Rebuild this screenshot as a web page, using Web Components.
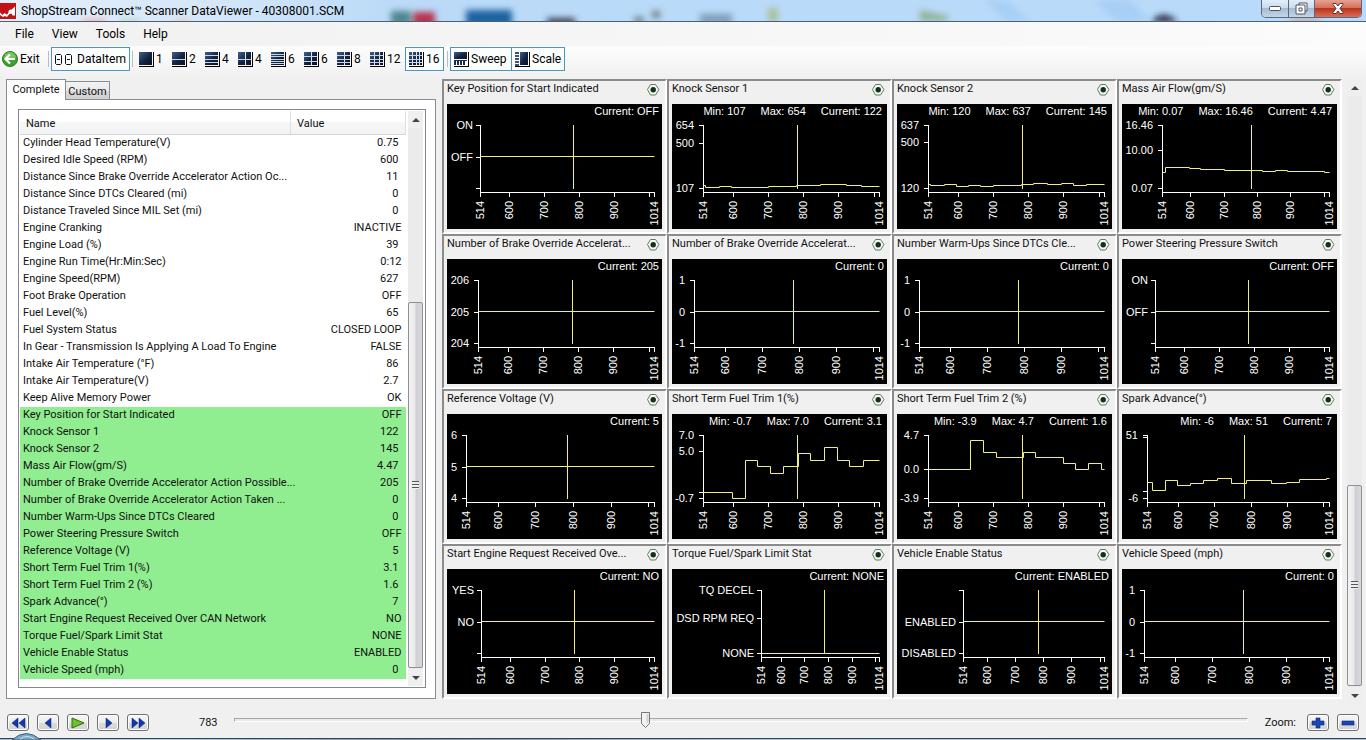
<!DOCTYPE html>
<html lang="en">
<head>
<meta charset="utf-8">
<title>ShopStream Connect Scanner DataViewer</title>
<style>
  html, body { margin: 0; height: 100%; }
  body { background: #f0f0f0; color: #111; font: 11px/17px Roboto, "Liberation Sans", sans-serif; }
</style>
</head>
<body>
<viewer-window></viewer-window>

<script>
const UI_FONT = '12px/16px Roboto, "Noto Sans", sans-serif';

/* Registers an element whose shadow root is filled from css + html. */
function element(name, css, html, setup) {
  customElements.define(name, class extends HTMLElement {
    connectedCallback() {
      if (this.shadowRoot) return;
      const root = this.attachShadow({ mode: 'open' });
      root.innerHTML = '<style>' + css + '</style>' + (typeof html === 'function' ? html(this) : html);
      if (setup) setup(this, root);
    }
  });
}

/* ---------- title bar ---------- */
element('title-bar', `
  :host { display: flex; position: relative; height: 21px; border-bottom: 1px solid #4c5f78; overflow: hidden;
    background: linear-gradient(90deg, #e4effa 0, #d4e6f8 220px, #badaf8 400px, #b9dafa 100%); color: #000; font: ${UI_FONT}; }
  .haze { position: absolute; inset: 0; width: 100%; height: 100%; }
  .logo { position: relative; flex: none; width: 16px; height: 16px; margin-top: 3px; }
  h1 { position: relative; flex: 1; margin: 3px 0 0 5px; font: inherit; white-space: nowrap; }
  .controls { position: relative; display: flex; margin-right: 4px; height: 17px; border: 1px solid #56697f; border-top: 0;
    border-radius: 0 0 5px 5px; overflow: hidden; }
  button { padding: 0; border: 0; height: 17px; width: 27px; display: grid; place-items: center;
    background: linear-gradient(#e3eefa 0, #ccdcec 45%, #a9bccf 50%, #c3d7ea 100%); border-right: 1px solid #56697f; }
  button:nth-child(2) { width: 26px; }
  button.close { width: 46px; border-right: 0; background: linear-gradient(#e6a193 0, #d5705c 45%, #bd3218 50%, #d8705a 100%); }
  svg { display: block; }`, `
  <svg class="haze" viewBox="0 0 1366 21" preserveAspectRatio="none" aria-hidden="true">
    <defs><filter id="b" x="-30%" y="-50%" width="160%" height="200%"><feGaussianBlur stdDeviation="3"/></filter></defs>
    <g filter="url(#b)">
      <path d="M82 20h24v4H82z" fill="#f09a9a"/><path d="M120 20h20v4h-20z" fill="#a5d9ae"/><path d="M175 20h14v4h-14z" fill="#d8c9a0"/>
      <path d="M391 11h20v14h-20z" fill="#4d8690"/><path d="M413 12h22v14h-22z" fill="#b8304c"/>
      <path d="M466 10h46v16h-46z" fill="#1b62a0"/><path d="M547 18h28v8h-28z" fill="#3f4550"/>
      <path d="M652 11h8v7h-8zM634 17h10v6h-10z" fill="#6f7b78"/><path d="M700 14h32v10h-32z" fill="#7f9db8"/>
      <path d="M768 8h10v14h-10z" fill="#a9c19a"/><path d="M920 10l28 6v5h-28z" fill="#8fb394"/>
      <path d="M1150 22q14-14 28 0z" fill="#1c1a30"/><path d="M1290 18h30v5h-30z" fill="#c8a890"/>
      <path d="M985 0l20 21h25L1005 0zM1130 0l20 21h-35L1095 0z" fill="#a8cff5"/>
    </g>
  </svg>
  <svg class="logo" viewBox="0 0 16 16" aria-hidden="true"><path d="M0 0h16v16H0z" fill="#c31118"/><path d="M0 9.500l2.500 2.500 2-2 2 1.500 1.500-1 1-3.500 2.500-.5L15 3.500v9h-2.500l-1-2-2 .5-2.500 3-2-1-2 1-3-2z" fill="#fff"/></svg>
  <h1>ShopStream Connect™ Scanner DataViewer - 40308001.SCM</h1>
  <div class="controls">
    <button aria-label="Minimize"><svg width="12" height="5"><rect x=".5" y=".5" width="11" height="4" rx="1" fill="#fff" stroke="#4a5568"/></svg></button>
    <button aria-label="Restore"><svg width="13" height="13"><path d="M4 1h8v8h-2v3H1V3h3z" fill="#fff" stroke="#4a5568"/><path d="M4 3h6v6M4 6h3v3H4z" fill="none" stroke="#4a5568"/></svg></button>
    <button class="close" aria-label="Close"><svg width="12" height="11"><path d="M1 .5h3L6 3 8 .5h3v1L8 5.500l3 4v1H8L6 8l-2 2.500H1v-1l3-4-3-4z" fill="#fff" stroke="#5f3434"/></svg></button>
  </div>`);

/* ---------- menu ---------- */
element('menu-bar', `
  :host { display: block; background: linear-gradient(90deg, #f1f1f1, #fafafa 90%, #fcfcfc); color: #000; font: ${UI_FONT}; }
  nav { display: flex; height: 24px; align-items: center; padding-left: 15px; gap: 18px; }
  a { color: inherit; text-decoration: none; }`,
  '<nav><a href="#file">File</a><a href="#view">View</a><a href="#tools">Tools</a><a href="#help">Help</a></nav>');

/* ---------- tool bar ---------- */
const frame = '<path d="M14 0h1v15H0v-1h14z" fill="#000"/>';
const navy = '<defs><linearGradient id="n" x1="0" y1="0" x2="1" y2="1"><stop offset="0" stop-color="#40618f"/><stop offset=".55" stop-color="#132340"/><stop offset="1" stop-color="#0b1220"/></linearGradient></defs>';
function gridIcon(cols, rows) {
  let cells = '';
  const xs = [...Array(cols + 1)].map((_, i) => Math.round(i * 13 / cols));
  const ys = [...Array(rows + 1)].map((_, i) => Math.round(i * 13 / rows));
  for (let c = 1; c < cols; c++) cells += `<path d="M${xs[c]} 0h1v13h-1z" fill="#dfe7f0"/>`;
  for (let r = 1; r < rows; r++) cells += `<path d="M0 ${ys[r]}h13v1H0z" fill="#c9d4e2"/>`;
  return `<svg width="15" height="15" aria-hidden="true">${navy}<path d="M0 0h13v13H0z" fill="url(#n)"/>${cells}${frame}</svg>`;
}
const icons = {
  exit: `<svg width="16" height="16" aria-hidden="true"><circle cx="8" cy="8" r="7.500" fill="#3fa22e" stroke="#2d7a22"/><path d="M2 7a6 6 0 0 1 12 0q-6 3-12 0z" fill="#8fd46f" opacity=".7"/><path d="M8 3.500L3.500 8 8 12.500M4 8h9" fill="none" stroke="#fff" stroke-width="2.200"/></svg>`,
  items: `<svg width="17" height="11" aria-hidden="true"><path d="M1.500.5h4l1 1v8l-1 1h-4l-1-1v-8zM11.500.5h4l1 1v8l-1 1h-4l-1-1v-8zM2 5.500h3M12 5.500h3" fill="none" stroke="#111"/></svg>`,
  sweep: `<svg width="15" height="15" aria-hidden="true">${navy}<path d="M0 0h13v7H0z" fill="url(#n)"/><path d="M0 8.500h13" stroke="#1c2c48"/><path d="M1 9v4M4 9v4M7 9v4M10 9v4" stroke="#1c2c48" stroke-width="2"/>${frame}</svg>`,
  scale: `<svg width="15" height="15" aria-hidden="true">${navy}<path d="M5 0h8v13H5z" fill="url(#n)"/><path d="M0 1h4M0 4h4M0 7h4M0 10h4M0 13h4" stroke="#3b5478" stroke-width="2"/>${frame}</svg>`
};
element('tool-button', `
  :host { display: block; color: #000; font: ${UI_FONT}; }
  button { display: flex; align-items: center; gap: 2px; box-sizing: border-box; height: 24px; width: var(--w, auto); padding: 0 0 0 3px;
    border: 1px solid transparent; background: none; color: inherit; font: inherit; white-space: nowrap; }
  :host([gap]) button { gap: 5px; }
  :host([pressed]) button { border-color: #4d94bf; background: #fbfdfe; }
  svg { flex: none; display: block; }`,
  el => {
    const k = el.getAttribute('icon');
    const art = icons[k] || gridIcon(...k.split('x').map(Number));
    return `<button aria-pressed="${el.hasAttribute('pressed')}">${art}<span><slot></slot></span></button>`;
  });
element('tool-bar', `
  :host { display: flex; height: 26px; padding: 1px 0 6px; background: linear-gradient(#fdfdfd, #f0f0f0); }
  i { width: 1px; height: 16px; margin: 4px 2px 0 3px; background: #bdbdbd; }
  i.tight { margin: 4px 2px 0; }
  .exit { --w: 47px; margin-left: -2px; } .items { --w: 79px; }
  .layouts { display: flex; }
  .layouts tool-button { --w: 33px; } .layouts .wide { --w: 39px; }
  .sweep { --w: 62px; } .scale { --w: 54px; margin-left: -1px; }`, `
  <tool-button class="exit" icon="exit">Exit</tool-button><i></i>
  <tool-button class="items" icon="items" gap pressed>DataItem</tool-button><i class="tight"></i>
  <div class="layouts">
    <tool-button icon="1x1">1</tool-button><tool-button icon="1x2">2</tool-button><tool-button icon="1x4">4</tool-button>
    <tool-button icon="2x2">4</tool-button><tool-button icon="1x6">6</tool-button><tool-button icon="2x3">6</tool-button>
    <tool-button icon="2x4">8</tool-button><tool-button class="wide" icon="3x4">12</tool-button><tool-button class="wide" icon="4x4" pressed>16</tool-button>
  </div><i></i>
  <tool-button class="sweep" icon="sweep" pressed>Sweep</tool-button>
  <tool-button class="scale" icon="scale" pressed>Scale</tool-button>`);

/* ---------- scroll bar: before / thumb / after are flex shares ---------- */
element('scroll-bar', `
  :host { display: flex; flex-direction: column; width: 15px; background: #ebebeb; }
  b { flex: none; height: 17px; display: grid; place-items: center; background: #efefef; }
  b::before { content: ""; border: 4px solid transparent; border-top: 0; border-bottom: 4px solid #444; }
  b.down::before { border-top: 4px solid #444; border-bottom: 0; }
  .thumb { display: grid; place-items: center; border: 1px solid #8f8f93; border-radius: 2px;
    background: linear-gradient(90deg, #f4f4f4, #e9e9eb 45%, #cfcfd3 55%, #d9d9dc 100%); }
  .grip { width: 7px; height: 8px; background: repeating-linear-gradient(#555 0 1px, #eee 1px 3px); }`,
  el => `<b></b><div style="flex:${el.getAttribute('before')} 0 0"></div>
  <div class="thumb" style="flex:${el.getAttribute('thumb')} 0 0"><div class="grip"></div></div>
  <div style="flex:${el.getAttribute('after')} 0 0"></div><b class="down"></b>`);

/* ---------- parameter list ---------- */
const readings = [
  ['Cylinder Head Temperature(V)', '0.75'], ['Desired Idle Speed (RPM)', '600'],
  ['Distance Since Brake Override Accelerator Action Oc...', '11'], ['Distance Since DTCs Cleared (mi)', '0'],
  ['Distance Traveled Since MIL Set (mi)', '0'], ['Engine Cranking', 'INACTIVE'], ['Engine Load (%)', '39'],
  ['Engine Run Time(Hr:Min:Sec)', '0:12'], ['Engine Speed(RPM)', '627'], ['Foot Brake Operation', 'OFF'],
  ['Fuel Level(%)', '65'], ['Fuel System Status', 'CLOSED LOOP'],
  ['In Gear - Transmission Is Applying A Load To Engine', 'FALSE'], ['Intake Air Temperature (°F)', '86'],
  ['Intake Air Temperature(V)', '2.7'], ['Keep Alive Memory Power', 'OK'],
  ['Key Position for Start Indicated', 'OFF', 1], ['Knock Sensor 1', '122', 1], ['Knock Sensor 2', '145', 1],
  ['Mass Air Flow(gm/S)', '4.47', 1], ['Number of Brake Override Accelerator Action Possible...', '205', 1],
  ['Number of Brake Override Accelerator Action Taken ...', '0', 1], ['Number Warm-Ups Since DTCs Cleared', '0', 1],
  ['Power Steering Pressure Switch', 'OFF', 1], ['Reference Voltage (V)', '5', 1], ['Short Term Fuel Trim 1(%)', '3.1', 1],
  ['Short Term Fuel Trim 2 (%)', '1.6', 1], ['Spark Advance(°)', '7', 1],
  ['Start Engine Request Received Over CAN Network', 'NO', 1], ['Torque Fuel/Spark Limit Stat', 'NONE', 1],
  ['Vehicle Enable Status', 'ENABLED', 1], ['Vehicle Speed (mph)', '0', 1]
];
element('data-list', `
  :host { display: flex; flex: 1; padding: 1px; border: 1px solid #828790; background: #fff; }
  .rows { flex: 1; }
  scroll-bar { margin: 0 1px 0 2px; }
  table { width: 100%; border-collapse: collapse; table-layout: fixed; }
  col.value { width: 115px; }
  th { box-sizing: border-box; height: 23px; padding: 2px 6px 0; text-align: left; font-weight: normal; line-height: 17px;
    background: linear-gradient(#fff 45%, #f5f6f8 50%, #f2f3f5); border-bottom: 1px solid #d5d5d5; border-right: 1px solid #dedfe1; }
  td { height: 17px; padding: 0 0 0 3px; line-height: 15px; vertical-align: top; white-space: nowrap; }
  td + td { text-align: right; padding-right: 4px; }
  td.num { padding-right: 7px; }
  tr.watched { background: #90ee90; }`, () => `
  <div class="rows"><table><colgroup><col><col class="value"></colgroup>
  <thead><tr><th scope="col">Name</th><th scope="col">Value</th></tr></thead><tbody>` +
  readings.map(([n, v, g]) => `<tr${g ? ' class="watched"' : ''}><td>${n}</td><td${/^[\d.]+$/.test(v) ? ' class="num"' : ''}>${v}</td></tr>`).join('') +
  `</tbody></table></div><scroll-bar before="175" thumb="367" after="1"></scroll-bar>`);

element('data-tabs', `
  :host { display: flex; flex-direction: column; }
  .tabs { display: flex; align-items: flex-end; height: 20px; }
  button { box-sizing: border-box; padding: 2px 0 0; font: inherit; color: inherit; border: 1px solid #898c95; border-bottom: 0; height: 18px; width: 44px;
    background: linear-gradient(#f3f3f3, #eaeaea 50%, #dadada 52%, #d0d0d0); border-left: 0; line-height: 15px; }
  button[aria-selected=true] { position: relative; z-index: 1; height: 21px; width: 60px; margin-bottom: -1px; padding: 0 0 2px; border-left: 1px solid #898c95; background: #fff; }
  .page { flex: 1; display: flex; box-sizing: border-box; padding: 9px 9px 10px 11px; border: 1px solid #898c95; background: #fff; }`, `
  <div class="tabs" role="tablist"><button role="tab" aria-selected="true">Complete</button><button role="tab" aria-selected="false">Custom</button></div>
  <div class="page" role="tabpanel"><data-list></data-list></div>`);

/* ---------- graphs ---------- */
const FIRST = 514, LAST = 1014, CURSOR = 783;
/* axis: left margin of the plot; y: [value, label]; steps: [value, last sample] */
const graphs = [
  { title: 'Key Position for Start Indicated', now: 'OFF', axis: 33, top: 1, low: -1, y: [[1, 'ON'], [0, 'OFF'], [-1]], steps: [[0]] },
  { title: 'Knock Sensor 1', min: '107', max: '654', now: '122', axis: 31, top: 654, low: 107, y: [[654, '654'], [500, '500'], [107, '107']],
    steps: [[126, 521], [108, 560], [117, 595], [108, 700], [117, 781], [126, 849], [135, 923], [126, 963], [117]] },
  { title: 'Knock Sensor 2', min: '120', max: '637', now: '145', axis: 31, top: 637, low: 120, y: [[637, '637'], [500, '500'], [120, '120']],
    steps: [[146, 522], [138, 562], [146, 595], [130, 630], [138, 663], [130, 700], [138, 779], [146, 814], [154, 853], [146, 894], [154, 926], [138, 964], [146]] },
  { title: 'Mass Air Flow(gm/S)', min: '0.07', max: '16.46', now: '4.47', axis: 40, top: 16.46, low: 0.07, y: [[16.46, '16.46'], [10, '10.00'], [0.07, '0.07']],
    steps: [[4.1, 524], [5.3, 597], [5.05, 630], [4.8, 701], [4.55, 814], [4.3, 854], [4.55, 891], [4.3, 1000], [4.1]] },
  { title: 'Number of Brake Override Accelerat...', now: '205', axis: 31, top: 206, low: 204, y: [[206, '206'], [205, '205'], [204, '204']], steps: [[205]] },
  { title: 'Number of Brake Override Accelerat...', now: '0', axis: 22, top: 1, low: -1, y: [[1, '1'], [0, '0'], [-1, '-1']], steps: [[0]] },
  { title: 'Number Warm-Ups Since DTCs Cle...', now: '0', axis: 22, top: 1, low: -1, y: [[1, '1'], [0, '0'], [-1, '-1']], steps: [[0]] },
  { title: 'Power Steering Pressure Switch', now: 'OFF', axis: 33, top: 1, low: -1, y: [[1, 'ON'], [0, 'OFF'], [-1]], steps: [[0]] },
  { title: 'Reference Voltage (V)', now: '5', axis: 19, top: 6, low: 4, y: [[6, '6'], [5, '5'], [4, '4']], steps: [[5]] },
  { title: 'Short Term Fuel Trim 1(%)', min: '-0.7', max: '7.0', now: '3.1', axis: 31, top: 7, low: -0.7, y: [[7, '7.0'], [5, '5.0'], [0], [-0.7, '-0.7']],
    steps: [[0, 597], [-0.7, 634], [3.9, 668], [3.1, 707], [2.3, 744], [3.1, 784], [4.7, 818], [3.9, 858], [5.5, 895], [3.9, 931], [3.1, 970], [3.9]] },
  { title: 'Short Term Fuel Trim 2 (%)', min: '-3.9', max: '4.7', now: '1.6', axis: 31, top: 4.7, low: -3.9, y: [[4.7, '4.7'], [0, '0.0'], [-3.9, '-3.9']],
    steps: [[0, 635], [3.9, 672], [2.3, 709], [1.6, 785], [2.3, 820], [1.6, 898], [0.8, 932], [0, 970], [0.8, 1006], [0]] },
  { title: 'Spark Advance(°)', min: '-6', max: '51', now: '7', axis: 25, top: 51, low: -6, y: [[51, '51'], [49], [0], [-6, '-6']],
    steps: [[8, 528], [0.5, 566], [10, 599], [5, 634], [7, 669], [10, 708], [11.5, 746], [7, 786], [10, 857], [7, 896], [8, 932], [11, 1006], [12]] },
  { title: 'Start Engine Request Received Ove...', now: 'NO', axis: 34, top: 1, low: -1, y: [[1, 'YES'], [0, 'NO'], [-1]], steps: [[0]] },
  { title: 'Torque Fuel/Spark Limit Stat', now: 'NONE', axis: 89, top: 9, low: 0, y: [[9, 'TQ DECEL'], [5, 'DSD RPM REQ'], [0, 'NONE']], steps: [[0]] },
  { title: 'Vehicle Enable Status', now: 'ENABLED', axis: 66, top: 2, low: 0, y: [[2], [1, 'ENABLED'], [0, 'DISABLED']], steps: [[1]] },
  { title: 'Vehicle Speed (mph)', now: '0', axis: 22, top: 1, low: -1, y: [[1, '1'], [0, '0'], [-1, '-1']], steps: [[0]] }
];
function plot(g, width) {
  const top = 21, bottom = 84, base = 88, right = width - 8;
  const X = s => Math.floor(g.axis + (s - FIRST) / (LAST - FIRST) * (right - g.axis)) + 0.5;
  const at = v => top + (g.top - v) / (g.top - g.low) * (bottom - top);
  const Y = v => Math.round(at(v)) + 0.5;
  const L = v => Math.floor(at(v) + 0.001) + 0.5;
  let axes = `M${X(FIRST)} ${top}V${base}M${g.axis} ${base + 0.5}H${right + 1}`, text = '';
  for (const [v, label] of g.y) {
    axes += `M${g.axis - 4} ${Y(v)}h4`;
    if (label) text += `<text x="${g.axis - (/\d/.test(label) ? 9 : 7)}" y="${Math.floor(Y(v)) + 4}" text-anchor="end">${label}</text>`;
  }
  for (const s of [FIRST, 600, 700, 800, 900, 1000, LAST]) {
    axes += `M${X(s)} ${base}v5`;
    if (s !== 1000) text += `<text transform="translate(${Math.floor(X(s)) + 4} 97) rotate(-90)" text-anchor="end">${s}</text>`;
  }
  let line = `M${X(FIRST)} ${L(g.steps[0][0])}`;
  g.steps.forEach(([v, end]) => { line += `V${L(v)}H${X(end || LAST)}`; });
  return `<path d="${axes}" stroke="#fff" fill="none"/><g fill="#fff">${text}</g>
    <path d="${line}M${X(CURSOR)} ${top}V${bottom + 1}" stroke="#efef80" fill="none"/>`;
}
element('graph-panel', `
  :host { display: block; min-width: 0; border: 2px solid; border-color: #8b8b8b #fff #fff #8b8b8b; padding: 0 3px 3px; }
  header { display: flex; height: 23px; justify-content: space-between; }
  h2 { margin: 0; font: inherit; line-height: 15px; white-space: nowrap; }
  button { padding: 0; border: 0; width: 13px; height: 12px; margin: 3px 2px 0 0; background: none; }
  button svg { display: block; }
  .screen { background: #000; color: #fff; height: 125px; position: relative; font-family: "Liberation Sans", Arial, sans-serif; }
  .stats { position: absolute; top: 0; right: 3px; display: flex; gap: 15px; line-height: 15px; white-space: nowrap; }
  .stats.range { right: 5px; }
  .plot { display: block; width: 100%; height: 125px; font: inherit; }`,
  el => {
    const g = graphs[el.getAttribute('graph')];
    const range = g.min ? `<span>Min: ${g.min}</span><span>Max: ${g.max}</span>` : '';
    return `<header><h2>${g.title}</h2><button aria-label="Graph options"><svg width="13" height="12" aria-hidden="true">
      <path d="M3.500.5h5l3.500 5-3.500 5.500h-5L.5 5.500z" fill="#f4f8f3" stroke="#5f7c5f"/><circle cx="6.200" cy="5.700" r="2.700" fill="#16301a"/></svg></button></header>
      <div class="screen"><svg class="plot"></svg><div class="stats${g.min ? ' range' : ''}">${range}<span>Current: ${g.now}</span></div></div>`;
  },
  (el, root) => {
    const g = graphs[el.getAttribute('graph')], svg = root.querySelector('.plot');
    const draw = () => { svg.innerHTML = plot(g, Math.round(svg.getBoundingClientRect().width) || 215); };
    draw();
    new ResizeObserver(draw).observe(svg);
  });
element('graph-grid', `
  :host { display: grid; grid-template-columns: repeat(4, minmax(0, 1fr)); align-content: start; }`,
  () => graphs.map((_, i) => `<graph-panel graph="${i}"></graph-panel>`).join(''));

/* ---------- playback ---------- */
const playArt = {
  'Rewind': '<path d="M8 1v10L2 6zM15 1v10L9 6z" fill="#1238b0" stroke="#0a1f66" stroke-width=".5"/>',
  'Step back': '<path d="M11 1v10L5 6z" fill="#1238b0" stroke="#0a1f66" stroke-width=".5"/>',
  'Play': '<path d="M2 1l12 5-12 5z" fill="#6cc02a" stroke="#2f6b12"/>',
  'Step forward': '<path d="M6 1v10l6-5z" fill="#1238b0" stroke="#0a1f66" stroke-width=".5"/>',
  'Fast forward': '<path d="M2 1v10l6-5zM9 1v10l6-5z" fill="#1238b0" stroke="#0a1f66" stroke-width=".5"/>',
  'Zoom in': '<path d="M6 1h4v3h4v4h-4v3H6V8H2V4h4z" fill="#1746b8" stroke="#0c226a" stroke-width=".6"/>',
  'Zoom out': '<path d="M2 4h12v4H2z" fill="#1746b8" stroke="#0c226a" stroke-width=".6"/>'
};
element('play-button', `
  :host { display: block; }
  button { display: grid; place-items: center; box-sizing: border-box; width: 22px; height: 17px; padding: 0; border: 1px solid #707070; border-radius: 3px;
    background: linear-gradient(#f8f8f8, #ebebeb 50%, #dcdcdc 52%, #d2d2d2); box-shadow: inset 0 0 0 1px #fff; }`,
  el => `<button aria-label="${el.getAttribute('action')}"><svg width="16" height="12" aria-hidden="true">${playArt[el.getAttribute('action')]}</svg></button>`);
element('playback-bar', `
  :host { display: flex; align-items: center; box-sizing: border-box; height: 34px; padding: 3px 7px 0; }
  .group { display: flex; gap: 8px; }
  output { width: 35px; margin-left: 50px; }
  input { flex: 1; height: 20px; margin: 0 17px 5px 0; appearance: none; background: none; }
  input::-webkit-slider-runnable-track { box-sizing: border-box; height: 4px; border: 1px solid #b4b4b4; border-color: #a8a8a8 #fff #fff #a8a8a8; background: #e9e9e9; }
  input::-webkit-slider-thumb { appearance: none; width: 11px; height: 16px; margin-top: -7px; border: 0;
    background: url("data:image/svg+xml,%3Csvg xmlns='http://www.w3.org/2000/svg' width='11' height='16'%3E%3Cpath d='M1.500.5h8v11l-4 4-4-4z' fill='%23f2f2f2' stroke='%23777'/%3E%3Cpath d='M6.500 2v10l2-2V2z' fill='%23d0d0d0'/%3E%3C/svg%3E") no-repeat; }
  .zoom { margin-right: 11px; }`, `
  <div class="group"><play-button action="Rewind"></play-button><play-button action="Step back"></play-button><play-button action="Play"></play-button>
  <play-button action="Step forward"></play-button><play-button action="Fast forward"></play-button></div>
  <output>783</output><input type="range" aria-label="Frame" min="0" max="1933" value="783">
  <span class="zoom">Zoom:</span>
  <div class="group"><play-button action="Zoom in"></play-button><play-button action="Zoom out"></play-button></div>`);

element('task-edge', `
  :host { display: block; position: relative; height: 2px; border-top: 1px solid #2d4560; box-sizing: border-box; background: linear-gradient(90deg, #9dbbd8, #b9cfe6 12%, #7f97b0 30%, #b5cbe4 60%, #a8c3de); }
  svg { position: absolute; left: 12px; bottom: 0; }`,
  '<svg width="30" height="7" aria-hidden="true"><path d="M0 7q14-13 29 0z" fill="#7ea6c4" stroke="#38607f"/><path d="M8 6q7-5 14 0" fill="none" stroke="#cfe3f0"/></svg>');

/* ---------- window ---------- */
element('viewer-window', `
  :host { display: flex; flex-direction: column; min-height: 100vh; }
  main { flex: 1; display: flex; }
  data-tabs { width: 430px; margin: 0 6px 5px; }
  graph-grid { flex: 1; margin-bottom: 5px; }
  main > scroll-bar { margin: 0 4px 0 5px; }`, `
  <title-bar></title-bar><menu-bar></menu-bar><tool-bar></tool-bar>
  <main><data-tabs></data-tabs><graph-grid></graph-grid><scroll-bar before="390" thumb="200" after="1"></scroll-bar></main>
  <playback-bar></playback-bar><task-edge></task-edge>`);
</script>
</body>
</html>
